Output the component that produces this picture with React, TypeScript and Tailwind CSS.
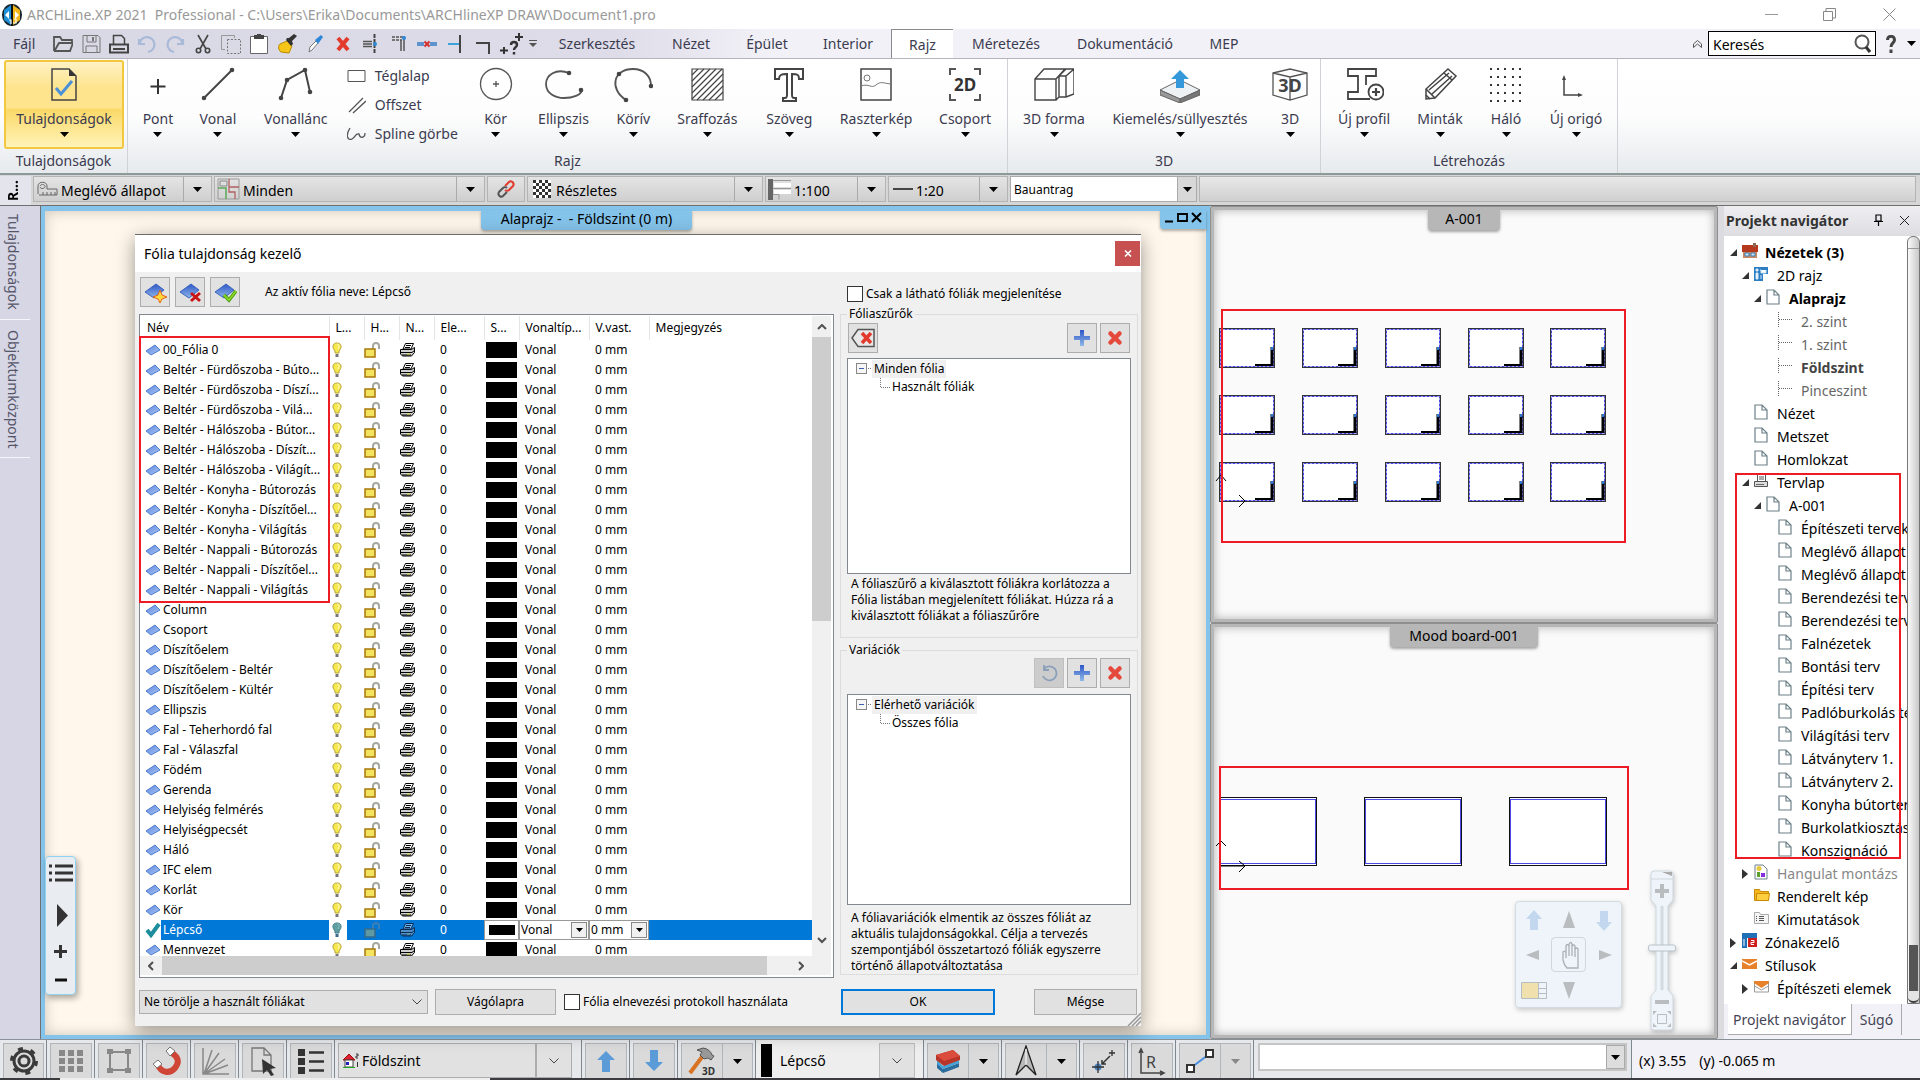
import type { ReactNode } from "react";

const LAYERS = [
	"00_Fólia 0",
	"Beltér - Fürdőszoba - Búto...",
	"Beltér - Fürdőszoba - Díszí...",
	"Beltér - Fürdőszoba - Vilá...",
	"Beltér - Hálószoba - Bútor...",
	"Beltér - Hálószoba - Díszít...",
	"Beltér - Hálószoba - Világít...",
	"Beltér - Konyha - Bútorozás",
	"Beltér - Konyha - Díszítőel...",
	"Beltér - Konyha - Világítás",
	"Beltér - Nappali - Bútorozás",
	"Beltér - Nappali - Díszítőel...",
	"Beltér - Nappali - Világítás",
	"Column",
	"Csoport",
	"Díszítőelem",
	"Díszítőelem - Beltér",
	"Díszítőelem - Kültér",
	"Ellipszis",
	"Fal - Teherhordó fal",
	"Fal - Válaszfal",
	"Födém",
	"Gerenda",
	"Helyiség felmérés",
	"Helyiségpecsét",
	"Háló",
	"IFC elem",
	"Korlát",
	"Kör",
	"Lépcső",
	"Mennvezet",
];

const ACTIVE_LAYER = "Lépcső";

type IconProps = { w: number; h: number; children: ReactNode; className?: string };

function Svg({ w, h, children, className = "shrink-0" }: IconProps) {
	return (
		<svg width={w} height={h} viewBox={`0 0 ${w} ${h}`} fill="none" className={className} aria-hidden="true">
			{children}
		</svg>
	);
}

function Down({ color = "#000" }: { color?: string }) {
	return (
		<Svg w={9} h={5}>
			<path d="M0 0h9L4.500 5z" fill={color} />
		</Svg>
	);
}

function Chevron() {
	return (
		<Svg w={10} h={6}>
			<path d="M.5.5 5 5 9.500.5" stroke="#444" />
		</Svg>
	);
}

/* ---------- title bar ---------- */

function TitleBar() {
	return (
		<header className="flex h-[29px] items-center bg-white pl-[2px] text-[14px] text-[#999]">
			<Svg w={20} h={24}>
				<ellipse cx="10" cy="12" rx="10" ry="11" fill="#17242e" />
				<path d="M2 7 9 2v20L2 17z" fill="#1f8fd6" />
				<path d="M11 2l7 5v10l-7 5z" fill="#f3b719" />
				<path d="M3 12l4-4v8zM17 12l-4-4v8z" fill="#fff" />
				<path d="M10 1v22" stroke="#111" strokeWidth="2" />
				<path d="M7 17h2v4M12 16h2v4h-3" stroke="#fff" strokeWidth="1.200" />
			</Svg>
			<h1 className="ml-[5px] flex-1 whitespace-pre">
				ARCHLine.XP 2021{"  "}Professional - C:\Users\Erika\Documents\ARCHlineXP DRAW\Document1.pro
			</h1>
			<div className="flex">
				<button type="button" aria-label="Kis méret" className="flex h-[29px] w-[58px] items-center justify-center">
					<Svg w={13} h={13}>
						<path d="M0 6.500h13" stroke="#999" />
					</Svg>
				</button>
				<button type="button" aria-label="Előző méret" className="flex h-[29px] w-[58px] items-center justify-center">
					<Svg w={13} h={13}>
						<path d="M.5 3.500h9v9h-9zM3 3V.5h9.500V10H10" stroke="#888" />
					</Svg>
				</button>
				<button type="button" aria-label="Bezárás" className="flex h-[29px] w-[62px] items-center justify-center">
					<Svg w={13} h={13}>
						<path d="M.5.5l12 12M12.500.5l-12 12" stroke="#888" />
					</Svg>
				</button>
			</div>
		</header>
	);
}

/* ---------- quick access + menu tabs ---------- */

const QUICK: { label: string; icon: ReactNode }[] = [
	{
		label: "Megnyitás",
		icon: <path d="M1 17V3h6l2 3h10v3M1 17h16l3-8H6L2 16" stroke="#555" strokeWidth="1.800" />,
	},
	{
		label: "Mentés",
		icon: (
			<g stroke="#777">
				<path d="M2 1.500h15l2 2v15H2zM6 2v6h9V2M5 18v-6h11v6" />
				<path d="M12 3v4" strokeWidth="2" />
			</g>
		),
	},
	{
		label: "Nyomtatás",
		icon: (
			<g stroke="#444">
				<path d="M4.500 10V1.500h8l3 3V10" strokeWidth="1.500" />
				<path d="M1 10.500h18v8H1z" strokeWidth="2" />
				<path d="M4 15h12" strokeWidth="2" />
			</g>
		),
	},
	{ label: "Visszavonás", icon: <path d="M2 5v5h6M2.500 9.500A7.500 7.500 0 1 1 11 18" stroke="#a9b9d8" strokeWidth="2.200" /> },
	{ label: "Ismét", icon: <path d="M18 5v5h-6M17.500 9.500A7.500 7.500 0 1 0 9 18" stroke="#a9b9d8" strokeWidth="2.200" /> },
	{
		label: "Kivágás",
		icon: (
			<g stroke="#444" strokeWidth="1.600">
				<path d="M5 1l8 14M15 1 7 15" />
				<circle cx="5.500" cy="16.500" r="2.200" />
				<circle cx="14.500" cy="16.500" r="2.200" />
			</g>
		),
	},
	{
		label: "Másolás",
		icon: (
			<g stroke="#999">
				<path d="M4 15.500H.5V1.500h13V4" />
				<path d="M6.500 5.500h13v14h-13z" strokeDasharray="2 1.500" stroke="#777" />
			</g>
		),
	},
	{
		label: "Beillesztés",
		icon: (
			<>
				<path d="M1.500 2.500h17v17h-17z" fill="#fff" stroke="#666" />
				<path d="M5 1h10v4H5z" fill="#444" />
				<path d="M8 0h4v2H8z" fill="#444" />
			</>
		),
	},
	{
		label: "Formátummásoló",
		icon: (
			<>
				<path d="M3 10l7-3 5 5-3 7-8-1c-3-2-3-6-1-8z" fill="#f5c518" stroke="#b98d00" />
				<path d="M9 6l5 6 2-2-1-3 5-5-3-2-5 4-2 0z" fill="#333" />
			</>
		),
	},
	{
		label: "Pipetta",
		icon: (
			<>
				<path d="M4 18l1-5 6-6 2 2-6 7z" fill="#fff" stroke="#777" />
				<path d="M10 6l3 4 5-7-2-2z" fill="#2c87d6" />
			</>
		),
	},
	{ label: "Törlés", icon: <path d="M5 4l10 12M15 4 5 16" stroke="#e23b2e" strokeWidth="4" /> },
	{
		label: "Vágás",
		icon: (
			<>
				<path d="M2 7.500h9M2 12.500h9M2 10h9" stroke="#555" strokeWidth="1.500" />
				<path d="M13.500 0v20" stroke="#444" strokeWidth="2" strokeDasharray="4 1" />
				<circle cx="14" cy="10" r="2" fill="#2c87d6" />
			</>
		),
	},
	{
		label: "Sarok",
		icon: (
			<>
				<path d="M3 3h13M3 6h10" stroke="#555" strokeWidth="1.500" strokeDasharray="3 1" />
				<path d="M15 5v12M12 6v11" stroke="#555" strokeWidth="1.500" />
				<circle cx="15" cy="4" r="2" fill="#2c87d6" />
			</>
		),
	},
	{
		label: "Szakasz törlése",
		icon: (
			<>
				<path d="M0 8h20v4H0z" fill="#5d93cf" />
				<path d="M7 6h6v8H7z" fill="#d6d6e4" />
				<path d="M7.500 7.500l5 5M12.500 7.500l-5 5" stroke="#d62f2f" strokeWidth="2" />
			</>
		),
	},
	{
		label: "Nyújtás",
		icon: (
			<>
				<path d="M3 10h11" stroke="#3ba2dc" strokeWidth="2" />
				<path d="M15 1v18" stroke="#444" strokeWidth="2" />
			</>
		),
	},
	{ label: "Letörés", icon: <path d="M3 9h13v11" stroke="#444" strokeWidth="2" /> },
];

const TABS = [
	{ label: "Szerkesztés", cls: "w-[112px]" },
	{ label: "Nézet", cls: "w-[76px]" },
	{ label: "Épület", cls: "w-[76px]" },
	{ label: "Interior", cls: "w-[86px]" },
	{ label: "Rajz", cls: "w-[62px] border-t border-l border-[#8a8a8a] bg-white" },
	{ label: "Méretezés", cls: "w-[106px]" },
	{ label: "Dokumentáció", cls: "w-[132px]" },
	{ label: "MEP", cls: "w-[66px]" },
];

function MenuBar() {
	return (
		<nav className="flex h-[30px] items-stretch border-b border-[#b4b4ba] bg-[linear-gradient(90deg,#d8d7e4_0%,#dddce8_32%,#f2f1f7_40%)] text-[14px] text-[#3b3b50]">
			<button type="button" className="w-[49px] pl-[13px] text-left">
				Fájl
			</button>
			{QUICK.map((q) => (
				<button key={q.label} type="button" aria-label={q.label} className="flex w-[28px] items-center justify-center">
					<Svg w={20} h={20}>{q.icon}</Svg>
				</button>
			))}
			<button type="button" aria-label="Súgó elem" className="flex w-[28px] items-center justify-center">
				<Svg w={24} h={26}>
					<path d="M20 2v8M16 6h8M5 16v7M1 19.500h8" stroke="#333" strokeWidth="2" />
					<path d="M12 14c0-4 6-4 6 0 0 2-3 2.500-3 5M15 21v2.500" stroke="#333" strokeWidth="2.400" />
				</Svg>
			</button>
			<button type="button" aria-label="Testreszabás" className="flex w-4 items-center justify-center">
				<Svg w={8} h={8}>
					<path d="M0 .5h8" stroke="#555" />
					<path d="M0 3h8L4 7z" fill="#555" />
				</Svg>
			</button>
			{TABS.map((t) => (
				<button key={t.label} type="button" className={`${t.cls} text-center`}>
					{t.label}
				</button>
			))}
			<div className="ml-auto flex items-center">
				<button type="button" aria-label="Menüszalag elrejtése" className="mr-[6px]">
					<Svg w={9} h={8}>
						<path d="M.5 4l4-3.500 4 3.500v3.500l-4-3.500-4 3.500z" stroke="#555" />
					</Svg>
				</button>
				<label className="flex h-[25px] w-[168px] items-center border border-black bg-white pr-1 text-black">
					<input
						type="text"
						aria-label="Keresés"
						defaultValue="Keresés"
						className="min-w-0 flex-1 pt-[2px] pl-1 outline-none"
					/>
					<Svg w={17} h={19}>
						<circle cx="8" cy="8" r="6.500" stroke="#555" strokeWidth="2" />
						<path d="M12 13l4 5" stroke="#333" strokeWidth="3" />
					</Svg>
				</label>
				<button type="button" aria-label="Súgó" className="mr-[4px] ml-[10px] flex items-center gap-[11px]">
					<Svg w={10} h={18}>
						<path d="M1.500 5c0-5 7-5 7 0 0 3-3.500 3-3.500 7M5 14.500V18" stroke="#444" strokeWidth="3" />
					</Svg>
					<Down />
				</button>
			</div>
		</nav>
	);
}

/* ---------- ribbon ---------- */

const dot = (x: number, y: number) => <circle key={`${x}-${y}`} cx={x} cy={y} r="2.300" fill="#444" />;

type Tool = { label: string; cls: string; icon: ReactNode };

const DRAW_LEFT: Tool[] = [
	{ label: "Pont", cls: "w-[60px]", icon: <path d="M20 12v15M12.500 19.500h15" stroke="#333" strokeWidth="2" /> },
	{
		label: "Vonal",
		cls: "w-[60px]",
		icon: (
			<>
				<path d="M6 31 34 3" stroke="#444" strokeWidth="2" />
				{dot(6, 31)}
				{dot(34, 3)}
			</>
		),
	},
	{
		label: "Vonallánc",
		cls: "w-[96px]",
		icon: (
			<>
				<path d="M5 31l6-18L29 3l5 22" stroke="#444" strokeWidth="2" />
				{dot(5, 31)}
				{dot(11, 13)}
				{dot(29, 3)}
				{dot(34, 25)}
			</>
		),
	},
];

const DRAW_RIGHT: Tool[] = [
	{
		label: "Kör",
		cls: "w-[60px]",
		icon: (
			<g stroke="#555" strokeWidth="1.300">
				<circle cx="20" cy="17" r="15.500" />
				<path d="M20 14v6M17 17h6" />
			</g>
		),
	},
	{
		label: "Ellipszis",
		cls: "w-[76px]",
		icon: (
			<>
				<path d="M25 6C12 1 2 8 2 17c0 10 10 14 18 14 9 0 17-3 18-8" stroke="#555" strokeWidth="1.800" />
				{dot(25, 6)}
				{dot(37, 23)}
			</>
		),
	},
	{
		label: "Körív",
		cls: "w-[64px]",
		icon: (
			<>
				<path d="M13 33C-4 22 0 2 20 2c11 0 18 7 18 17" stroke="#555" strokeWidth="1.800" />
				{dot(13, 33)}
				{dot(6, 7)}
				{dot(38, 19)}
			</>
		),
	},
	{
		label: "Sraffozás",
		cls: "w-[84px]",
		icon: (
			<g stroke="#444" strokeWidth="1.200">
				<path d="M5 2h31v31H5z" />
				<path d="M5 8l6-6M5 14 17 2M5 20 23 2M5 26 29 2M5 32 35 2M10 33 36 7M16 33l20-20M22 33l14-14M28 33l8-8" />
			</g>
		),
	},
	{
		label: "Szöveg",
		cls: "w-[80px]",
		icon: (
			<path
				d="M6 2h28v10h-4c0-4-1-5-7-5v21c0 3 1 3 4 3v3H14v-3c3 0 4 0 4-3V7c-6 0-8 1-8 5H6z"
				stroke="#444"
				strokeWidth="2"
			/>
		),
	},
	{
		label: "Raszterkép",
		cls: "w-[94px]",
		icon: (
			<>
				<path d="M5 2h30v31H5z" stroke="#444" strokeWidth="1.500" />
				<path d="M5 19c8-3 10 3 15-1s6-2 15-1" stroke="#777" />
				<circle cx="11" cy="11" r="3" stroke="#777" />
			</>
		),
	},
	{
		label: "Csoport",
		cls: "w-[84px]",
		icon: (
			<>
				<path d="M5 8V2h6M29 2h6v6M5 27v6h6M29 33h6v-6" stroke="#555" strokeWidth="2" />
				<text x="20" y="24" textAnchor="middle" fontSize="17" fontWeight="700" fill="#333">
					2D
				</text>
			</>
		),
	},
];

const SOLID_TOOLS: Tool[] = [
	{
		label: "3D forma",
		cls: "w-[92px]",
		icon: (
			<g stroke="#444" strokeWidth="1.400">
				<path d="M1 12h21v21H1zM1 12 10 2h30v25l-8 3h-7l-3 3M22 12 31 2M25 30V9h7V30M25 9l7-7M32 9l8-7" />
			</g>
		),
	},
	{
		label: "Kiemelés/süllyesztés",
		cls: "w-[160px]",
		icon: (
			<>
				<path d="M0 23l20-10 20 10-20 9z" fill="#eef1f3" stroke="#666" />
				<path d="M0 23v5l20 8v-4z" fill="#999" stroke="#666" />
				<path d="M40 23v5l-20 8v-4z" fill="#777" stroke="#666" />
				<path d="M20 3l9 9h-5v9h-8v-9h-5z" fill="#3498db" />
			</>
		),
	},
	{
		label: "3D",
		cls: "w-[60px]",
		icon: (
			<>
				<path d="M3 6 20 2l17 4v22l-17 5L3 28zM3 6l17 4 17-4M20 10v23" stroke="#555" strokeWidth="1.300" />
				<text x="20" y="25" textAnchor="middle" fontSize="18" fontWeight="700" fill="#444">
					3D
				</text>
			</>
		),
	},
];

const CREATE_TOOLS: Tool[] = [
	{
		label: "Új profil",
		cls: "w-[86px]",
		icon: (
			<g stroke="#444" strokeWidth="1.800">
				<path d="M26 32H4v-7h10V9H4V2h28v7H22v9" />
				<circle cx="32" cy="25" r="7.500" fill="#fff" />
				<path d="M32 21v8M28 25h8" strokeWidth="2.200" />
			</g>
		),
	},
	{
		label: "Minták",
		cls: "w-[66px]",
		icon: (
			<g stroke="#444" strokeWidth="1.500">
				<path d="M6 32V22L28 2l8 7-21 22z" />
				<path d="M6 22l9 9M9 23 29 6M12 27 32 9M24 6l8 7M6 28l4 4" />
			</g>
		),
	},
	{
		label: "Háló",
		cls: "w-[66px]",
		icon: [1, 9, 17, 25, 33].flatMap((y) =>
			[4, 11, 18, 26, 33].map((x) => <rect key={`${x}-${y}`} x={x} y={y} width="2" height="2" fill="#333" />),
		),
	},
	{
		label: "Új origó",
		cls: "w-[74px]",
		icon: (
			<>
				<path d="M8 11v17h16" stroke="#444" strokeWidth="1.500" />
				<path d="M8 8l-2 5h4zM27 28l-5-2v4z" fill="#444" />
			</>
		),
	},
];

function ToolButton({ tool }: { tool: Tool }) {
	return (
		<button type="button" className={`${tool.cls} flex h-[90px] flex-col items-center pt-[8px]`}>
			<Svg w={40} h={36}>{tool.icon}</Svg>
			<span className="mt-[6px] text-[14px] leading-5 whitespace-nowrap">{tool.label}</span>
			<span className="mt-[3px]">
				<Down />
			</span>
		</button>
	);
}

function RibbonGroup({ title, children, className }: { title: string; children: ReactNode; className: string }) {
	return (
		<section className={`flex flex-col border-r border-[#cfd3d8] ${className}`}>
			<div className="flex flex-1">{children}</div>
			<h2 className="text-center leading-6">{title}</h2>
		</section>
	);
}

function Ribbon() {
	return (
		<div className="flex h-[116px] border-b-2 border-[#8d9898] bg-[linear-gradient(180deg,#fff_0%,#fdfdfd_50%,#e6eaed_100%)] text-[14px] text-[#3b3b50]">
			<RibbonGroup title="Tulajdonságok" className="w-[128px]">
				<button
					type="button"
					className="mt-px ml-1 flex h-[89px] w-[120px] flex-col items-center rounded-[3px] border-2 border-[#f3c83e] bg-[linear-gradient(180deg,#fff2c4_0%,#fde48d_30%,#fde48d_54%,#fbd968_56%,#fff3b8_100%)] pt-[6px]"
				>
					<Svg w={26} h={34}>
						<path d="M1 1h17l7 7v24H1z" stroke="#444" strokeWidth="1.500" />
						<path d="M18 1v7h7z" fill="#333" />
						<path d="M5 20l5 6L21 13" stroke="#4a90d9" strokeWidth="3" />
					</Svg>
					<span className="mt-[7px] text-[14px] leading-5">Tulajdonságok</span>
					<span className="mt-[3px]">
						<Down />
					</span>
				</button>
			</RibbonGroup>
			<RibbonGroup title="Rajz" className="w-[880px]">
				{DRAW_LEFT.map((t) => (
					<ToolButton key={t.label} tool={t} />
				))}
				<div className="flex w-[122px] flex-col pt-[2px] pl-[3px]">
					<button type="button" className="flex h-[29px] items-center gap-[9px]">
						<Svg w={19} h={14}>
							<path d="M1 1.500h17v11H1z" stroke="#555" />
						</Svg>
						Téglalap
					</button>
					<button type="button" className="flex h-[29px] items-center gap-[9px]">
						<Svg w={19} h={18}>
							<path d="M2 16 16 2M6 17 19 5" stroke="#555" strokeWidth="1.300" />
						</Svg>
						Offszet
					</button>
					<button type="button" className="flex h-[29px] items-center gap-[9px] whitespace-nowrap">
						<Svg w={19} h={16}>
							<path d="M3 2C-2 10 1 15 5 13s3-6 7-5c1 5 6 4 6-1" stroke="#555" strokeWidth="1.300" />
						</Svg>
						Spline görbe
					</button>
				</div>
				{DRAW_RIGHT.map((t) => (
					<ToolButton key={t.label} tool={t} />
				))}
			</RibbonGroup>
			<RibbonGroup title="3D" className="w-[313px]">
				{SOLID_TOOLS.map((t) => (
					<ToolButton key={t.label} tool={t} />
				))}
			</RibbonGroup>
			<RibbonGroup title="Létrehozás" className="w-[297px]">
				{CREATE_TOOLS.map((t) => (
					<ToolButton key={t.label} tool={t} />
				))}
			</RibbonGroup>
		</div>
	);
}

/* ---------- options bar ---------- */

function OptionCombo({ label, icon, className }: { label: string; icon?: ReactNode; className: string }) {
	return (
		<label
			className={`flex h-[26px] items-center border border-[#b4b4b4] bg-[linear-gradient(180deg,#e4e4e4,#cfcfcf)] pl-[2px] ${className}`}
		>
			{icon}
			<select aria-label={label} className="h-full min-w-0 flex-1 appearance-none pt-[3px] pl-[3px] outline-none">
				<option>{label}</option>
			</select>
			<span className="pointer-events-none flex h-full w-[28px] items-center justify-center border-l border-[#aaa]">
				<Down />
			</span>
		</label>
	);
}

function OptionsBar() {
	return (
		<div className="flex h-[31px] gap-[2px] border-b border-[#6f6f6f] bg-[#d6d6d6] pt-px text-[14px] text-black">
			<div className="flex w-[31px] items-center justify-center bg-[#e4e4ec] pr-[6px]">
				<span className="rotate-180 text-[14px] leading-4 font-bold [writing-mode:vertical-rl]">R...</span>
			</div>
			<OptionCombo
				label="Meglévő állapot"
				className="w-[179px]"
				icon={
					<Svg w={22} h={16}>
						<path d="M2 13V5c0-5 9-5 9 0v3h10v6H3M4 5c1-2 4-2 5 0s-4 4-5 1" stroke="#666" />
						<path d="M7 11v3M11 11v3M15 11v3M19 11v3" stroke="#666" />
					</Svg>
				}
			/>
			<OptionCombo
				label="Minden"
				className="w-[271px]"
				icon={
					<Svg w={23} h={22}>
						<path d="M1 1h21v20H1z" stroke="#999" />
						<path d="M1 10h8v11" stroke="#5aa95a" strokeWidth="1.500" />
						<path d="M12 1v8h10M12 9v5h6v7" stroke="#b06060" strokeWidth="1.300" />
						<path d="M3 3h7v5H3z" stroke="#888" />
					</Svg>
				}
			/>
			<button
				type="button"
				aria-label="Összekapcsolás"
				className="flex h-[26px] w-[38px] items-center justify-center border border-[#b4b4b4] bg-[linear-gradient(180deg,#e4e4e4,#cfcfcf)]"
			>
				<Svg w={18} h={18}>
					<path d="M8 6l4-4c2-2 6 1 4 4l-4 4c-1 1-3 1-4 0" stroke="#e23b2e" strokeWidth="2" />
					<path d="M10 12l-4 4c-2 2-6-1-4-4l4-4c1-1 3-1 4 0" stroke="#555" strokeWidth="2" />
				</Svg>
			</button>
			<OptionCombo
				label="Részletes"
				className="w-[236px]"
				icon={
					<Svg w={20} h={18} className="ml-[3px] shrink-0">
						<rect width="18" height="18" fill="#fff" />
						{[0, 1, 2, 3, 4, 5].flatMap((r) =>
							[0, 1, 2].map((c) => (
								<rect key={`${r}-${c}`} x={c * 6 + (r % 2) * 3} y={r * 3} width="3" height="3" fill="#333" />
							)),
						)}
					</Svg>
				}
			/>
			<OptionCombo
				label="1:100"
				className="w-[121px]"
				icon={
					<Svg w={23} h={21}>
						<rect width="5" height="21" fill="#666" />
						<path d="M6 4h17v4H6zM6 11h17v4H6z" fill="#fff" />
						<path d="M5 1.500h18M5 9.500h18M5 15.500h6v5" stroke="#999" />
					</Svg>
				}
			/>
			<OptionCombo
				label="1:20"
				className="w-[120px]"
				icon={
					<Svg w={22} h={4}>
						<path d="M2 2h20" stroke="#444" strokeWidth="2" />
					</Svg>
				}
			/>
			<label className="flex h-[26px] w-[187px] items-stretch border border-[#aaa] bg-white text-[12px]">
				<select aria-label="Tervfázis" className="min-w-0 flex-1 appearance-none pt-[2px] pl-[3px] outline-none">
					<option>Bauantrag</option>
				</select>
				<span className="pointer-events-none flex w-[19px] items-center justify-center border-l border-[#aaa] bg-[#d8d8d8]">
					<Down />
				</span>
			</label>
			<div className="mr-[4px] h-[26px] flex-1 border border-[#b4b4b4] bg-[linear-gradient(180deg,#e8e8e8,#d0d0d0)]" />
		</div>
	);
}

/* ---------- list icons ---------- */

function LayerIcon() {
	return (
		<Svg w={16} h={14}>
			<path d="M1 8 10 2l5 5-9 5z" fill="url(#layerFill)" stroke="#4f7fd0" />
		</Svg>
	);
}

function BulbIcon({ on }: { on: boolean }) {
	return (
		<Svg w={18} h={16}>
			<path d="M8 1c5 0 5 5 2 8v2H6V9C3 6 3 1 8 1z" fill={on ? "#f6e94f" : "#5f9f9f"} stroke={on ? "#b9a43a" : "#3f7f8f"} />
			<path d="M8 2c2 0 3 2 1 5" stroke={on ? "#fffbd0" : "#8fc0c0"} />
			<path d="M6.500 12h3v3h-3z" fill={on ? "#777" : "#3a6a86"} />
		</Svg>
	);
}

function LockIcon({ on }: { on: boolean }) {
	return (
		<Svg w={18} h={16}>
			<path d="M9 7V4c0-4 6-4 6 0v3" stroke={on ? "#a5aaa0" : "#3d7fb5"} strokeWidth="2" />
			<path d="M1 7h10v8H1z" fill={on ? "#f4e35c" : "#5f9aa3"} stroke={on ? "#a8780c" : "#356a8c"} strokeWidth="1.500" />
		</Svg>
	);
}

function PrinterIcon({ on }: { on: boolean }) {
	const paper = on ? "#fff" : "#6fb0e6";
	const body = on ? "#cfcfcf" : "#4f8fc6";
	const ink = on ? "#000" : "#0b2d55";
	return (
		<Svg w={18} h={16}>
			<path d="M4 7 6.500 1.500h8L12 7z" fill={paper} stroke={ink} />
			<path d="M7 3.500h5M6 5.500h5" stroke={ink} />
			<path d="M1.500 7.500h11l3-2v5l-3 3.500h-9l-2-2z" fill={body} stroke={ink} />
			<path d="M1 10.500h12l3-2.500M3 13h9" stroke={ink} />
			<path d="M8 12h3" stroke={on ? "#e8e13a" : "#7fb0a0"} />
		</Svg>
	);
}

/* ---------- layer dialog ---------- */

const COLUMNS = [
	{ label: "Név", cls: "w-[189px]" },
	{ label: "L...", cls: "w-[35px]" },
	{ label: "H...", cls: "w-[35px]" },
	{ label: "N...", cls: "w-[35px]" },
	{ label: "Ele...", cls: "w-[50px]" },
	{ label: "S...", cls: "w-[35px]" },
	{ label: "Vonaltíp...", cls: "w-[70px]" },
	{ label: "V.vast.", cls: "w-[60px]" },
	{ label: "Megjegyzés", cls: "" },
];

function CellSelect({ value, label }: { value: string; label: string }) {
	return (
		<span className="flex h-5 items-stretch border border-[#999] bg-white text-black">
			<select aria-label={label} className="min-w-0 flex-1 appearance-none pl-px outline-none">
				<option>{value}</option>
			</select>
			<span className="pointer-events-none my-px mr-px flex w-4 items-center justify-center border border-[#888] bg-[#f0f0f0]">
				<Svg w={7} h={4}>
					<path d="M0 0h7L3.500 4z" fill="#000" />
				</Svg>
			</span>
		</span>
	);
}

function LayerRow({ name }: { name: string }) {
	const active = name === ACTIVE_LAYER;
	const fill = active ? "bg-[#0078d7] text-white" : "";
	return (
		<tr className="h-5">
			<td className="p-0">
				<span className="flex h-5 items-center pl-[5px]">
					{active ? (
						<Svg w={16} h={16}>
							<path d="M2 8l4 5L14 2" stroke="#1c8d9c" strokeWidth="4" />
						</Svg>
					) : (
						<LayerIcon />
					)}
					<span className={`h-5 flex-1 overflow-hidden pl-[2px] leading-5 whitespace-nowrap ${fill}`}>{name}</span>
				</span>
			</td>
			<td className={`p-0 ${fill}`}>
				<span className="flex h-5 w-[18px] items-center bg-white">
					<BulbIcon on={!active} />
				</span>
			</td>
			<td className={`p-0 ${fill}`}>
				<LockIcon on={!active} />
			</td>
			<td className={`p-0 ${fill}`}>
				<PrinterIcon on={!active} />
			</td>
			<td className={`p-0 pl-[6px] ${fill}`}>0</td>
			<td className="p-0">
				{active ? (
					<span className="flex h-5 items-center justify-center border border-[#999] bg-white">
						<span className="h-[10px] w-[26px] bg-black" />
					</span>
				) : (
					<span className="mx-[2px] block h-4 bg-black" />
				)}
			</td>
			<td className="p-0">{active ? <CellSelect value="Vonal" label="Vonaltípus" /> : <span className="pl-[6px]">Vonal</span>}</td>
			<td className="p-0">{active ? <CellSelect value="0 mm" label="Vonalvastagság" /> : <span className="pl-[6px]">0 mm</span>}</td>
			<td className={`p-0 ${fill}`} />
		</tr>
	);
}

function SquareButton({ label, children }: { label: string; children: ReactNode }) {
	return (
		<button
			type="button"
			aria-label={label}
			className="flex h-[30px] w-[30px] items-center justify-center border border-[#adadad] bg-[#e1e1e1]"
		>
			{children}
		</button>
	);
}

function LayerButtonIcon({ children }: { children: ReactNode }) {
	return (
		<Svg w={24} h={22}>
			<path d="M2 11 13 3l8 6-10 8z" fill="url(#layerDark)" stroke="#3a62c0" />
			{children}
		</Svg>
	);
}

const plusIcon = (
	<Svg w={18} h={18}>
		<path d="M7 1h4v6h6v4h-6v6H7v-6H1V7h6z" fill="url(#layerDark)" />
	</Svg>
);

const crossIcon = (
	<Svg w={18} h={18}>
		<path d="M4.500 4.500l9 9M13.500 4.500l-9 9" stroke="#e5493c" strokeWidth="4.500" strokeLinecap="round" />
	</Svg>
);

function Tree({ root, child, className }: { root: string; child: string; className: string }) {
	return (
		<ul className={`border border-[#828790] bg-white pt-px pl-2 leading-[18px] ${className}`}>
			<li>
				<span className="flex items-center">
					<Svg w={16} h={12}>
						<rect x=".5" y=".5" width="10" height="10" fill="#f6f6f6" stroke="#888" />
						<path d="M3 5.500h5" stroke="#3c5ea8" />
						<path d="M12 5.500h4" stroke="#777" strokeDasharray="1 1" />
					</Svg>
					<span className="bg-[#f0f0f0] px-[2px]">{root}</span>
				</span>
				<ul>
					<li className="flex items-center pl-6">
						<Svg w={11} h={18}>
							<path d="M.5 0v9.500H10" stroke="#777" strokeDasharray="1 1" />
						</Svg>
						<span className="pl-px">{child}</span>
					</li>
				</ul>
			</li>
		</ul>
	);
}

function LayerDialog() {
	return (
		<div
			role="dialog"
			aria-label="Fólia tulajdonság kezelő"
			className="absolute top-[23px] left-[90px] w-[1006px] border-t border-[#6b6b6b] bg-[#f0f0f0] text-[12px] leading-4 text-black shadow-[0_5px_18px_rgba(0,0,0,0.4)]"
		>
			<div className="flex h-[37px] items-center bg-white pl-[9px]">
				<h2 className="flex-1 text-[14px]">Fólia tulajdonság kezelő</h2>
				<button type="button" aria-label="Bezárás" className="mr-px flex h-[25px] w-[25px] items-center justify-center bg-[#c75050]">
					<Svg w={8} h={7}>
						<path d="M1 .5l6 6M7 .5l-6 6" stroke="#fff" strokeWidth="1.600" />
					</Svg>
				</button>
			</div>

			<div className="flex gap-[6px] pr-[3px] pl-1">
				<div className="w-[695px] pt-[5px]">
					<div className="flex items-center gap-[5px] pl-px">
						<SquareButton label="Új fólia">
							<LayerButtonIcon>
								<path d="M17 9l2 5 5 2-5 2-2 4-2-4-5-2 5-2z" fill="#ffd93b" stroke="#e0641c" />
							</LayerButtonIcon>
						</SquareButton>
						<SquareButton label="Fólia törlése">
							<LayerButtonIcon>
								<path d="M13 12l9 8M22 12l-9 8" stroke="#c81414" strokeWidth="3" />
							</LayerButtonIcon>
						</SquareButton>
						<SquareButton label="Aktív fólia">
							<LayerButtonIcon>
								<path d="M11 14l5 5 7-9" stroke="#4a9a10" strokeWidth="3.500" />
								<path d="M11 14l5 5 7-9" stroke="#8fdc2a" strokeWidth="1.500" />
							</LayerButtonIcon>
						</SquareButton>
						<p className="pl-5">Az aktív fólia neve: Lépcső</p>
					</div>

					<div className="relative mt-[7px] border border-[#828790] bg-white pt-px pb-[2px]">
						<div className="flex">
							<div className="h-[640px] flex-1 overflow-hidden">
								<table className="w-full table-fixed border-collapse text-left">
									<thead>
										<tr className="h-6">
											{COLUMNS.map((c, i) => (
												<th
													key={c.label}
													scope="col"
													className={`${c.cls} border-r border-[#e5e5e5] p-0 font-normal whitespace-nowrap last:border-r-0 ${i === 0 ? "pl-[7px]" : "pl-[6px]"}`}
												>
													{c.label}
												</th>
											))}
										</tr>
									</thead>
									<tbody>
										{LAYERS.map((name) => (
											<LayerRow key={name} name={name} />
										))}
									</tbody>
								</table>
							</div>
							<div className="mr-[2px] flex w-[19px] flex-col items-center bg-[#f0f0f0]">
								<span className="flex h-[21px] items-center">
									<Svg w={10} h={6}>
										<path d="M1 5l4-4 4 4" stroke="#505050" strokeWidth="2" />
									</Svg>
								</span>
								<span className="h-[284px] w-full bg-[#cdcdcd]" />
								<span className="mt-auto flex h-[24px] items-start">
									<Svg w={10} h={16}>
										<path d="M1 6l4 4 4-4" stroke="#505050" strokeWidth="2" />
									</Svg>
								</span>
							</div>
						</div>
						<div className="mr-[2px] flex h-[19px] items-center bg-[#f0f0f0]">
							<span className="flex w-[22px] justify-center">
								<Svg w={6} h={10}>
									<path d="M5 1 1 5l4 4" stroke="#505050" strokeWidth="2" />
								</Svg>
							</span>
							<span className="h-full w-[605px] bg-[#cdcdcd]" />
							<span className="ml-[31px]">
								<Svg w={6} h={10}>
									<path d="M1 1l4 4-4 4" stroke="#505050" strokeWidth="2" />
								</Svg>
							</span>
						</div>
						<div className="pointer-events-none absolute top-[21px] left-[-1px] h-[267px] w-[191px] border-2 border-[#ed1c24]" />
					</div>
				</div>

				<div className="w-[298px] pt-[14px]">
					<label className="flex h-4 items-center gap-[3px] pl-[7px]">
						<input type="checkbox" className="h-4 w-4 appearance-none border border-[#333] bg-white" />
						Csak a látható fóliák megjelenítése
					</label>
					<fieldset className="mt-1 min-w-0 border border-[#dcdcdc] px-[6px] pb-[13px]">
						<legend className="px-[2px]">Fóliaszűrők</legend>
						<div className="flex gap-[3px] pt-px pr-px pl-px">
							<SquareButton label="Szűrő törlése">
								<Svg w={24} h={20}>
									<path d="M1 10l6-8.500h16v17H7z" fill="#e8e8e8" stroke="#555" strokeWidth="1.500" />
									<path d="M11 5l9 10M20 5l-9 10" stroke="#e23b2e" strokeWidth="3.500" />
								</Svg>
							</SquareButton>
							<span className="flex-1" />
							<SquareButton label="Új szűrő">{plusIcon}</SquareButton>
							<SquareButton label="Szűrő eltávolítása">{crossIcon}</SquareButton>
						</div>
						<Tree root="Minden fólia" child="Használt fóliák" className="mt-[5px] h-[216px]" />
						<p className="mt-[2px] pl-1">
							A fóliaszűrő a kiválasztott fóliákra korlátozza a<br />
							Fólia listában megjelenített fóliákat. Húzza rá a<br />
							kiválasztott fóliákat a fóliaszűrőre
						</p>
					</fieldset>
					<fieldset className="mt-1 min-w-0 border border-[#dcdcdc] px-[6px]">
						<legend className="px-[2px]">Variációk</legend>
						<div className="flex justify-end gap-[3px] pr-px">
							<button
								type="button"
								aria-label="Variáció visszaállítása"
								className="flex h-[30px] w-[30px] items-center justify-center border border-[#bfbfbf] bg-[#ccc]"
							>
								<Svg w={18} h={18}>
									<path d="M4 5a7 7 0 1 1-1 7M4 1v5h5" stroke="#8a9fba" strokeWidth="1.800" />
								</Svg>
							</button>
							<SquareButton label="Új variáció">{plusIcon}</SquareButton>
							<SquareButton label="Variáció törlése">{crossIcon}</SquareButton>
						</div>
						<Tree root="Elérhető variációk" child="Összes fólia" className="mt-[6px] h-[211px]" />
						<p className="mt-[5px] pl-1">
							A fóliavariációk elmentik az összes fóliát az
							<br />
							aktuális tulajdonságokkal. Célja a tervezés
							<br />
							szempontjából összetartozó fóliák egyszerre
							<br />
							történő állapotváltoztatása
						</p>
					</fieldset>
				</div>
			</div>

			<div className="flex items-center pt-[11px] pr-1 pb-[11px] pl-1">
				<label className="flex h-6 w-[289px] items-center border border-[#adadad] bg-[#e1e1e1] pr-[5px]">
					<select aria-label="Fóliák törlése" className="flex-1 appearance-none pl-1 outline-none">
						<option>Ne törölje a használt fóliákat</option>
					</select>
					<Chevron />
				</label>
				<button type="button" className="ml-[7px] h-[26px] w-[121px] border border-[#adadad] bg-[#e1e1e1]">
					Vágólapra
				</button>
				<label className="ml-2 flex items-center gap-[3px]">
					<input type="checkbox" className="h-4 w-4 appearance-none border border-[#333] bg-white" />
					Fólia elnevezési protokoll használata
				</label>
				<button type="button" className="ml-auto h-[26px] w-[154px] border-2 border-[#0078d7] bg-[#e1e1e1]">
					OK
				</button>
				<button type="button" className="ml-[39px] h-[26px] w-[103px] border border-[#adadad] bg-[#e1e1e1]">
					Mégse
				</button>
			</div>
			<Svg w={14} h={14} className="absolute right-0 bottom-0">
				<path d="M1 14 14 1M5 14l9-9M9 14l5-5" stroke="#999" strokeWidth="1.500" />
			</Svg>
		</div>
	);
}

/* ---------- viewports ---------- */

function FloatingTools() {
	return (
		<div className="absolute bottom-[40px] left-0 flex h-[139px] w-[31px] flex-col items-center rounded-[4px] border border-[#8fd3f2] bg-[#e9edf1] shadow-[2px_3px_6px_rgba(0,0,0,0.35)]">
			<button type="button" aria-label="Lista" className="flex h-[32px] items-center">
				<Svg w={24} h={20}>
					<path d="M6 3h18M6 10h18M6 17h18" stroke="#333" strokeWidth="3" />
					<path d="M0 3h3M0 10h3M0 17h3" stroke="#333" strokeWidth="3" />
				</Svg>
			</button>
			<button type="button" aria-label="Lejátszás" className="mt-2 ml-1 flex h-[36px] items-center">
				<Svg w={11} h={23}>
					<path d="M0 0l11 11.500L0 23z" fill="#333" />
				</Svg>
			</button>
			<button type="button" aria-label="Nagyítás" className="flex h-[36px] items-center">
				<Svg w={13} h={13}>
					<path d="M6.500 0v13M0 6.500h13" stroke="#333" strokeWidth="3" />
				</Svg>
			</button>
			<button type="button" aria-label="Kicsinyítés" className="flex h-[22px] items-center">
				<Svg w={12} h={4}>
					<path d="M0 2h12" stroke="#111" strokeWidth="3" />
				</Svg>
			</button>
		</div>
	);
}

function PlanViewport() {
	return (
		<div className="relative flex-1 border-4 border-t-[5px] border-[#84c3ea] bg-[#fff7eb] text-[14px] text-black shadow-[inset_0_0_14px_rgba(0,0,0,0.2)]">
			<h2 className="absolute top-[-1px] left-[436px] h-[20px] w-[211px] rounded-b-[4px] bg-[#84c3ea] text-center leading-[18px] whitespace-pre shadow-[0_2px_3px_rgba(0,0,0,0.3)]">
				Alaprajz -{"  "}- Földszint (0 m)
			</h2>
			<div className="absolute top-[-1px] right-0 flex h-[19px] w-[46px] items-center justify-center gap-[3px] rounded-bl-[4px] bg-[#84c3ea] pb-1 shadow-[0_2px_3px_rgba(0,0,0,0.3)]">
				<button type="button" aria-label="Kis méret">
					<Svg w={9} h={11}>
						<path d="M0 9.500h8" stroke="#000" strokeWidth="2" />
					</Svg>
				</button>
				<button type="button" aria-label="Teljes méret">
					<Svg w={11} h={11}>
						<path d="M1 2h9v7H1z" stroke="#000" strokeWidth="1.800" />
					</Svg>
				</button>
				<button type="button" aria-label="Nézet bezárása">
					<Svg w={11} h={11}>
						<path d="M1 1l9 9M10 1l-9 9" stroke="#000" strokeWidth="2" />
					</Svg>
				</button>
			</div>
			<FloatingTools />
			<LayerDialog />
		</div>
	);
}

function Frame({ title, tabClass, children }: { title: string; tabClass: string; children: ReactNode }) {
	return (
		<section className="relative flex-1 overflow-hidden rounded-[2px] border-4 border-[#b7b7b7] bg-[#fafafa] shadow-[inset_0_0_10px_rgba(0,0,0,0.3)] outline outline-[#8f8f8f] -outline-offset-1">
			{children}
			<h2
				className={`absolute top-0 left-1/2 h-[20px] -translate-x-1/2 rounded-b-[4px] bg-[#b7b7b7] text-center text-[14px] leading-[18px] text-black shadow-[0_2px_3px_rgba(0,0,0,0.35)] ${tabClass}`}
			>
				{title}
			</h2>
		</section>
	);
}

function SheetsDrawing() {
	return (
		<svg className="absolute inset-0 h-full w-full" fill="none" aria-hidden="true">
			{[118, 185, 252].map((y) =>
				[5, 88, 171, 254, 336].map((x) => (
					<g key={`${x}-${y}`}>
						<rect x={x + 0.5} y={y + 0.5} width="55" height="39" fill="#fff" stroke="#333" />
						<rect x={x + 1.5} y={y + 1.5} width="53" height="37" stroke="#4a48e6" strokeDasharray="3 1" />
						<path d={`M${x + 36} ${y + 37}h16`} stroke="#000" strokeWidth="2" />
						<path d={`M${x + 53} ${y + 19}v19`} stroke="#000" strokeWidth="3" />
						<path d={`M${x + 53} ${y + 19}v3`} stroke="#2b78d0" strokeWidth="2" />
					</g>
				)),
			)}
			<path d="M2 271l5-6 5 6M25 285l6 6-6 6" stroke="#000" />
			<rect x="8" y="100" width="403" height="232" stroke="#ed1c24" strokeWidth="2" />
		</svg>
	);
}

function MoodDrawing() {
	return (
		<svg className="absolute inset-0 h-full w-full" fill="none" aria-hidden="true">
			{[5, 150, 295].map((x) => (
				<g key={x}>
					<rect x={x + 0.5} y="170.500" width="97" height="68" fill="#fff" stroke="#111" />
					<rect x={x + 1.5} y="172.500" width="95" height="64" stroke="#4a48e6" />
				</g>
			))}
			<path d="M2 219l5-5 5 5M7 239h23M25 234l6 5-6 6" stroke="#000" />
			<rect x="6" y="140" width="408" height="122" stroke="#ed1c24" strokeWidth="2" />
		</svg>
	);
}

const PAN_PAD: { label: string; icon: ReactNode }[] = [
	{ label: "Szint fel", icon: <path d="M14 4l8 9h-4v11h-8V13H6z" fill="#c3d7ef" /> },
	{ label: "Fel", icon: <path d="M14 5l6 17H8z" fill="#b9bdc0" /> },
	{ label: "Szint le", icon: <path d="M14 25l8-9h-4V5h-8v11H6z" fill="#c3d7ef" /> },
	{ label: "Balra", icon: <path d="M6 14l13-5v10z" fill="#b9bdc0" /> },
	{
		label: "Mozgatás",
		icon: (
			<path
				d="M8 19v-8q2-2 3 1V5q1-3 3 0V3q2-3 3 0v2q2-2 3 0v3q2-2 3 0v19H12q-3-3-4-8zM11 12v5M14 5v10M17 4v11M20 6v10"
				stroke="#aab0b6"
				strokeWidth="1.300"
			/>
		),
	},
	{ label: "Jobbra", icon: <path d="M22 14 9 9v10z" fill="#b9bdc0" /> },
	{
		label: "Elrendezés",
		icon: (
			<>
				<path d="M1.500 6.500h25v16h-25z" stroke="#b5bcc2" />
				<path d="M2 7h16v15H2z" fill="#f0e0ae" />
				<path d="M18.500 7v15M19 12.500h7M19 17.500h7" stroke="#b5bcc2" />
			</>
		),
	},
	{ label: "Le", icon: <path d="M14 23l6-17H8z" fill="#b9bdc0" /> },
];

function MoodControls() {
	return (
		<>
			<div className="absolute right-[92px] bottom-[27px] grid h-[107px] w-[107px] grid-cols-3 grid-rows-3 rounded-[4px] border border-[#d3dce3] bg-[#eef4f9] shadow-[1px_2px_5px_rgba(0,0,0,0.2)]">
				{PAN_PAD.map((p) => (
					<button
						key={p.label}
						type="button"
						aria-label={p.label}
						className={
							p.label === "Mozgatás"
								? "flex items-center justify-center rounded-[4px] border border-[#cfd6dc]"
								: "flex items-center justify-center"
						}
					>
						<Svg w={28} h={28}>{p.icon}</Svg>
					</button>
				))}
			</div>
			<Svg w={28} h={162} className="absolute right-[38px] bottom-[3px] drop-shadow-[1px_2px_2px_rgba(0,0,0,0.2)]">
				<path
					d="M3 4q0-3 3-3h16q3 0 3 3v26l-5 6v84l5 6v31q0 3-3 3H6q-3 0-3-3v-31l5-6V36l-5-6z"
					fill="#eef4f9"
					stroke="#cfd8df"
				/>
				<path d="M3 9h22" stroke="#cfd8df" />
				<path d="M14 2l10 4V2z" fill="#aaa" />
				<path d="M14 14v14M7 21h14M7 132h14" stroke="#b9bdc0" strokeWidth="4" />
				<path d="M14 36v84" stroke="#d3dae0" strokeWidth="3" />
				<rect x=".5" y="75" width="27" height="6" rx="2" fill="#eef4f9" stroke="#b9c2c9" />
				<path d="M9.500 144.500h9v9h-9z" stroke="#b9bdc0" />
				<path d="M5 145v-4h4zM23 145v-4h-4zM5 153v4h4zM23 153v4h-4z" fill="#b9bdc0" />
			</Svg>
		</>
	);
}

/* ---------- project navigator ---------- */

const pageIcon = (
	<Svg w={14} h={16}>
		<path d="M1 1h7l5 5v9H1zM8 1v5h5" fill="#fff" stroke="#6c8088" strokeWidth="1.200" />
	</Svg>
);

const lineIcon = (
	<Svg w={14} h={16}>
		<path d="M.5 0v15M1 7.500h13" stroke="#666" strokeDasharray="1 1" />
	</Svg>
);

type NavItem = {
	label: string;
	level: number;
	id?: string;
	open?: boolean;
	icon: ReactNode;
	tone?: string;
};

const page = (label: string, level: number, id?: string): NavItem => ({ label, level, id, icon: pageIcon });
const floor = (label: string, tone = "text-[#666]"): NavItem => ({ label, level: 3, icon: lineIcon, tone });

const NAV: NavItem[] = [
	{
		label: "Nézetek (3)",
		level: 0,
		open: true,
		tone: "font-bold text-black",
		icon: (
			<Svg w={16} h={16}>
				<path d="M0 2h16v7H0z" fill="#b5391f" />
				<path d="M1 9h14v6H1z" fill="#c98b63" />
				<path d="M3 10h4v3H3zM9 10h4v3H9z" fill="#cfe8f8" stroke="#3b7fb5" />
				<path d="M11 0h3v4h-3z" fill="#8a6a55" />
			</Svg>
		),
	},
	{
		label: "2D rajz",
		level: 1,
		open: true,
		icon: (
			<Svg w={14} h={14}>
				<path d="M0 0h14v7H9v7H0z" fill="#2d7fc4" />
				<path d="M2 2h2v2H2zM2 6h2v6H2zM6 3h1v3h5V3M7 8v4" fill="#fff" stroke="#cfe4f6" />
			</Svg>
		),
	},
	{ label: "Alaprajz", level: 2, open: true, icon: pageIcon, tone: "font-bold text-black" },
	floor("2. szint"),
	floor("1. szint"),
	floor("Földszint", "font-bold text-[#444]"),
	floor("Pinceszint"),
	page("Nézet", 1),
	page("Metszet", 1),
	page("Homlokzat", 1),
	{
		label: "Tervlap",
		level: 1,
		open: true,
		icon: (
			<Svg w={15} h={14}>
				<path d="M3.500 7V.5h8V7M5 3h5M5 5h5" fill="#fff" stroke="#555" />
				<path d="M.5 7.500h13v5H.5z" fill="#ddd" stroke="#555" />
				<path d="M2 10.500h8" stroke="#666" />
			</Svg>
		),
	},
	{ label: "A-001", level: 2, open: true, icon: pageIcon },
	page("Építészeti tervek", 3),
	page("Meglévő állapot", 3, "m1"),
	page("Meglévő állapot", 3, "m2"),
	page("Berendezési terv", 3, "b1"),
	page("Berendezési terv", 3, "b2"),
	page("Falnézetek", 3),
	page("Bontási terv", 3),
	page("Építési terv", 3),
	page("Padlóburkolás terv", 3),
	page("Világítási terv", 3),
	page("Látványterv 1.", 3),
	page("Látványterv 2.", 3),
	page("Konyha bútorterv", 3),
	page("Burkolatkiosztás", 3),
	page("Konszignáció", 3),
	{
		label: "Hangulat montázs",
		level: 1,
		open: false,
		tone: "text-[#888]",
		icon: (
			<Svg w={14} h={16}>
				<path d="M1 1h8l4 4v10H1z" fill="#fff" stroke="#6c8088" />
				<circle cx="5" cy="4.500" r="2.500" fill="#e6c93a" />
				<path d="M3 8h3v5H3z" fill="#5aa02c" />
				<path d="M7 9h4v4H7z" fill="#8a2be2" />
			</Svg>
		),
	},
	{
		label: "Renderelt kép",
		level: 1,
		icon: (
			<Svg w={16} h={14}>
				<path d="M.5 12.500V1.500h5l1 2h8v9z" fill="#f5b81a" stroke="#c98a08" />
				<path d="M2.500 5.500h13l-1 7h-12z" fill="#ffcf3f" stroke="#c98a08" />
			</Svg>
		),
	},
	{
		label: "Kimutatások",
		level: 1,
		icon: (
			<Svg w={15} h={12}>
				<path d="M.5 .5h5l1 2h8v9H.5z" fill="#f5f5f5" stroke="#aaa" />
				<path d="M2 4.500h1M5 4.500h5M2 6.500h1M5 6.500h5M2 8.500h1M5 8.500h5" stroke="#555" />
			</Svg>
		),
	},
	{
		label: "Zónakezelő",
		level: 0,
		open: false,
		icon: (
			<Svg w={15} h={15}>
				<path d="M0 0h15v5H5v10H0z" fill="#2070b8" />
				<path d="M2 6v7" stroke="#fff" />
				<path d="M6 5h9v9H6z" fill="#cf2020" />
				<path d="M9 7.500h3v2H9v2h3" stroke="#fff" />
			</Svg>
		),
	},
	{
		label: "Stílusok",
		level: 0,
		open: true,
		icon: (
			<Svg w={15} h={12}>
				<path d="M0 1h15v10H0z" fill="#e8822a" />
				<path d="M0 3l7.500 4L15 3" stroke="#fff" strokeWidth="1.500" />
			</Svg>
		),
	},
	{
		label: "Építészeti elemek",
		level: 1,
		open: false,
		icon: (
			<Svg w={15} h={12}>
				<path d="M.5 1.500h14v9.500H.5z" fill="#fff" stroke="#999" />
				<path d="M0 0h15v2L7.500 7 0 2z" fill="#e8822a" />
				<path d="M.5 5l7 4 7-4" stroke="#999" />
			</Svg>
		),
	},
];

const INDENT = ["pl-[4px]", "pl-[16px]", "pl-[28px]", "pl-[40px]"];

function Arrow({ open }: { open?: boolean }) {
	return (
		<span className="flex w-[14px] shrink-0 items-center pl-[2px]">
			{open === true && (
				<Svg w={7} h={7}>
					<path d="M7 0v7H0z" fill="#333" />
				</Svg>
			)}
			{open === false && (
				<Svg w={6} h={10}>
					<path d="M0 0l6 5-6 5z" fill="#333" />
				</Svg>
			)}
		</span>
	);
}

function Navigator() {
	return (
		<aside className="flex w-[196px] flex-col bg-[#f2f1f7] text-[14px] text-black">
			<div className="flex h-[30px] items-center bg-[linear-gradient(180deg,#efeff2,#dddde2)] pr-[10px] pb-[2px] pl-[2px]">
				<h2 className="flex-1 font-bold whitespace-nowrap text-[#333]">Projekt navigátor</h2>
				<button type="button" aria-label="Rögzítés" className="mr-4">
					<Svg w={9} h={12}>
						<path d="M2 1h5v6H2zM0 7.500h9M4.500 8v4" stroke="#000" strokeWidth="1.200" />
					</Svg>
				</button>
				<button type="button" aria-label="Panel bezárása">
					<Svg w={11} h={11}>
						<path d="M1 1l9 9M10 1l-9 9" stroke="#222" />
					</Svg>
				</button>
			</div>
			<div className="relative flex flex-1 bg-white">
				<ul className="min-w-0 flex-1 overflow-hidden pt-[5px]">
					{NAV.map((n) => (
						<li key={n.id ?? n.label} className={`flex h-[23px] items-center ${INDENT[n.level]}`}>
							<Arrow open={n.open} />
							<span className="flex w-[23px] shrink-0 pb-1">{n.icon}</span>
							<span className={`leading-[23px] whitespace-nowrap ${n.tone ?? ""}`}>{n.label}</span>
						</li>
					))}
				</ul>
				<div className="flex w-[13px] flex-col rounded-t-[6px] border border-[#777] bg-[linear-gradient(90deg,#fafafa,#c8c8c8)]">
					<span className="h-3 border-b border-[#999]" />
					<span className="flex-1" />
					<span className="mx-px h-[46px] bg-[#555]" />
					<span className="h-3 rounded-b-[6px] border-b-2 border-[#444] bg-[#e4e4e4]" />
				</div>
				<div className="pointer-events-none absolute top-[237px] left-[11px] h-[386px] w-[166px] border-2 border-[#ed1c24]" />
			</div>
			<div className="flex h-[35px] items-start pb-1 pl-1 text-[#444455]">
				<button type="button" className="h-[31px] w-[124px] border-r border-b border-[#aaa] bg-white whitespace-nowrap">
					Projekt navigátor
				</button>
				<button type="button" className="h-[31px] w-[50px] border-r border-[#aaa]">
					Súgó
				</button>
			</div>
		</aside>
	);
}

/* ---------- status bar ---------- */

function StatusCell({ children, className = "" }: { children: ReactNode; className?: string }) {
	return <div className={`flex items-stretch border-r border-[#7d8890] pt-[3px] pr-[2px] pl-[3px] ${className}`}>{children}</div>;
}

function StatusButton({ label, children, drop }: { label: string; children: ReactNode; drop?: string }) {
	return (
		<>
			<button type="button" aria-label={label} className="flex w-[42px] items-center justify-center border border-b-0 border-[#b0b5ba] bg-[#dadada]">
				{children}
			</button>
			{drop && (
				<button
					type="button"
					aria-label={`${label} beállításai`}
					className="flex w-[30px] items-center justify-center border border-b-0 border-l-0 border-[#b0b5ba] bg-[#dadada]"
				>
					<Down color={drop} />
				</button>
			)}
		</>
	);
}

const SNAP_TOOLS: { label: string; icon: ReactNode; first?: boolean }[] = [
	{
		label: "Beállítások",
		first: true,
		icon: (
			<g stroke="#3a3a3a">
				<circle cx="15" cy="15" r="10" strokeWidth="3" />
				<circle cx="15" cy="15" r="5" strokeWidth="3" />
				<circle cx="15" cy="15" r="12.500" strokeWidth="3" strokeDasharray="5 8.090" />
			</g>
		),
	},
	{
		label: "Rács",
		icon: [4, 12, 20].flatMap((y) =>
			[3, 12, 21].map((x) => <rect key={`${x}-${y}`} x={x} y={y} width="6" height="6" fill="#888" />),
		),
	},
	{
		label: "Keret",
		icon: (
			<>
				<path d="M6 6h18v18H6z" stroke="#888" strokeWidth="2" />
				<path d="M3 3h6v5H3zM21 3h6v5h-6zM3 22h6v5H3zM21 22h6v5h-6z" fill="#888" />
			</>
		),
	},
	{
		label: "Mágnes",
		icon: (
			<>
				<path d="M6 19c3 8 12 9 17 3s3-11-3-15" stroke="#cf4636" strokeWidth="6" />
				<path d="M1 18l5-4 4 4-5 4zM14 5l4-4 5 4-5 5z" fill="#fff" stroke="#777" />
			</>
		),
	},
	{
		label: "Szögek",
		icon: <path d="M3 2v26h26M4 28 12 4M4 28 19 7M4 28 25 13M4 28l24-9" stroke="#888" strokeWidth="1.500" />,
	},
	{
		label: "Kijelölés",
		icon: (
			<>
				<path d="M4 2h12l7 7v16H4zM16 2v7h7" stroke="#777" strokeWidth="1.300" />
				<path d="M14 13l14 9-6 1 4 6-3 1-4-6-4 4z" fill="#333" />
			</>
		),
	},
	{
		label: "Lista",
		icon: (
			<>
				<path d="M2 3h7v7H2zM2 12h7v7H2zM2 21h7v7H2z" fill="#333" />
				<path d="M13 6.500h15M13 15.500h15M13 24.500h15" stroke="#333" strokeWidth="2.500" />
			</>
		),
	},
];

function StatusBar() {
	return (
		<footer className="border-t border-[#8a9098]">
			<div className="flex h-[38px] bg-[#e6e8ec] text-[14px] text-black">
				{SNAP_TOOLS.map((s) => (
					<StatusCell key={s.label} className={s.first ? "w-[47px] pl-[2px]" : "w-12"}>
						<StatusButton label={s.label}>
							<Svg w={30} h={30}>{s.icon}</Svg>
						</StatusButton>
					</StatusCell>
				))}
				<StatusCell className="w-[247px]">
					<label className="flex flex-1 items-stretch">
						<span className="flex w-[198px] items-center border border-[#adadad] bg-[#e1e1e1] pl-1">
							<Svg w={16} h={15}>
								<path d="M0 7 6 1l6 6z" fill="#d23" stroke="#911" />
								<path d="M2 7h8v7H2z" fill="#fff" stroke="#444" />
								<path d="M3 9h3v3H3z" fill="#22b" />
								<path d="M0 14.500h12" stroke="#2a2" />
								<path d="M13 1h2v2h-2v2h2M14.500 9v5" stroke="#333" />
							</Svg>
							<select aria-label="Szint" className="flex-1 appearance-none pl-[3px] outline-none">
								<option>Földszint</option>
							</select>
						</span>
						<span className="pointer-events-none flex w-[36px] items-center justify-center border border-[#adadad] bg-[#e1e1e1]">
							<Chevron />
						</span>
					</label>
				</StatusCell>
				<StatusCell>
					<StatusButton label="Szint fel">
						<Svg w={18} h={22}>
							<path d="M9 1l9 9h-5v12H5V10H0z" fill="#5b9bd8" />
						</Svg>
					</StatusButton>
				</StatusCell>
				<StatusCell>
					<StatusButton label="Szint le">
						<Svg w={18} h={22}>
							<path d="M9 21l9-9h-5V0H5v12H0z" fill="#5b9bd8" />
						</Svg>
					</StatusButton>
				</StatusCell>
				<StatusCell>
					<StatusButton label="Kalapács" drop="#000">
						<Svg w={30} h={30}>
							<path d="M3 27 15 11" stroke="#d97324" strokeWidth="4" />
							<path d="M10 4l6-2q7 1 9 7l2 1-3 4-3-2-4 1-4-4 2-3z" fill="#999" stroke="#555" />
							<text x="15" y="29" fontSize="10" fontWeight="700" fill="#333">
								3D
							</text>
						</Svg>
					</StatusButton>
				</StatusCell>
				<StatusCell className="w-[168px] bg-[#eee]">
					<label className="flex flex-1 items-stretch pl-[2px]">
						<span className="my-px w-[11px] bg-black" />
						<select aria-label="Aktív fólia" className="min-w-0 flex-1 appearance-none pl-2 outline-none">
							<option>Lépcső</option>
						</select>
						<span className="pointer-events-none mr-[6px] flex w-[36px] items-center justify-center border border-[#bbb] bg-[#e1e1e1]">
							<Chevron />
						</span>
					</label>
				</StatusCell>
				<StatusCell>
					<StatusButton label="Fóliák" drop="#000">
						<Svg w={24} h={26}>
							<path d="M1 15l6 6 16-6v4L7 25l-6-5z" fill="#2b6c9c" />
							<path d="M1 12l6 6 16-6v3L7 21l-6-5z" fill="#46a3d8" />
							<path d="M0 7 17 2l7 6v4L8 18l-8-6z" fill="#b8352a" />
							<path d="M0 7 17 2l7 6L8 13z" fill="#dc4c3c" />
						</Svg>
					</StatusButton>
				</StatusCell>
				<StatusCell>
					<StatusButton label="Északjel" drop="#000">
						<Svg w={22} h={32}>
							<path d="M11 1 21 30l-10-10L1 30z" fill="#b8b8b8" stroke="#222" strokeWidth="1.300" />
							<path d="M11 4v16" stroke="#eee" strokeWidth="1.500" />
						</Svg>
					</StatusButton>
				</StatusCell>
				<StatusCell>
					<StatusButton label="Relatív pont">
						<Svg w={26} h={26}>
							<circle cx="7" cy="19" r="3.500" fill="#4a86c8" />
							<path d="M7 13v12M1 19h12M21 2v6M18 5h6" stroke="#333" strokeWidth="1.300" />
							<path d="M19 8l-8 8M11 12v4h4" stroke="#333" strokeWidth="1.500" />
						</Svg>
					</StatusButton>
				</StatusCell>
				<StatusCell>
					<StatusButton label="Referencia">
						<Svg w={28} h={30}>
							<path d="M3 4v23h23M1 7l2-4 2 4M22 25l4 2-4 2" stroke="#444" strokeWidth="1.500" />
							<text x="8" y="22" fontSize="16" fill="#444">
								R
							</text>
						</Svg>
					</StatusButton>
				</StatusCell>
				<StatusCell>
					<StatusButton label="Szakasz" drop="#888">
						<Svg w={30} h={28}>
							<path d="M7 20 23 8" stroke="#4a90e2" strokeWidth="2" />
							<path d="M2 18h7v7H2zM21 3h7v7h-7z" fill="#fff" stroke="#333" strokeWidth="2" />
						</Svg>
					</StatusButton>
				</StatusCell>
				<div className="flex min-w-0 flex-1 px-1 pt-[3px]">
					<label className="flex h-[28px] flex-1 items-stretch border-2 border-[#c5c5c5] bg-white">
						<input type="text" aria-label="Parancssor" className="min-w-0 flex-1 px-1 outline-none" />
						<span className="pointer-events-none flex w-[19px] items-center justify-center border border-[#aaa] bg-[#ddd]">
							<Down />
						</span>
					</label>
				</div>
				<p className="flex w-[289px] items-center gap-[13px] border-l border-[#7d8890] bg-[#f2f1f7] pt-[2px] pl-[7px]">
					<span>(x) 3.55</span>
					<span>(y) -0.065 m</span>
				</p>
			</div>
			<div className="flex h-[2px] bg-[#3c3c40]">
				<span className="ml-[60px] w-[430px] bg-[#eee]" />
			</div>
		</footer>
	);
}

export default function App() {
	return (
		<div className="flex min-h-screen w-full flex-col overflow-hidden bg-[#f2f1f7] font-['Noto_Sans','Open_Sans',sans-serif]">
			<svg width="0" height="0" className="absolute" aria-hidden="true">
				<defs>
					<linearGradient id="layerFill" x1="0" y1="0" x2="1" y2="1">
						<stop offset="0" stopColor="#5f86dd" />
						<stop offset="1" stopColor="#a9c6f2" />
					</linearGradient>
					<linearGradient id="layerDark" x1="0" y1="0" x2="0" y2="1">
						<stop offset="0" stopColor="#2f57c8" />
						<stop offset="1" stopColor="#8fb8e8" />
					</linearGradient>
				</defs>
			</svg>
			<TitleBar />
			<MenuBar />
			<Ribbon />
			<OptionsBar />
			<main className="flex flex-1">
				<div className="w-[40px] bg-[#d6d6e4] pt-[8px] text-[14px] text-[#55556a]">
					<button type="button" className="h-[106px] w-[30px] border-b border-[#f4f4fa] pr-1 text-left [writing-mode:vertical-rl]">
						Tulajdonságok
					</button>
					<button type="button" className="mt-[6px] h-[128px] w-[30px] border-b border-[#f4f4fa] pr-1 text-left [writing-mode:vertical-rl]">
						Objektumközpont
					</button>
				</div>
				<div className="flex min-w-0 flex-1 border-l border-[#6f6f6f]">
					<PlanViewport />
					<div className="flex w-[508px] flex-col">
						<Frame title="A-001" tabClass="w-[72px]">
							<SheetsDrawing />
						</Frame>
						<Frame title="Mood board-001" tabClass="w-[148px]">
							<MoodDrawing />
							<MoodControls />
						</Frame>
					</div>
				</div>
				<div className="w-[6px] bg-[#dcdce0]" />
				<Navigator />
			</main>
			<StatusBar />
		</div>
	);
}
